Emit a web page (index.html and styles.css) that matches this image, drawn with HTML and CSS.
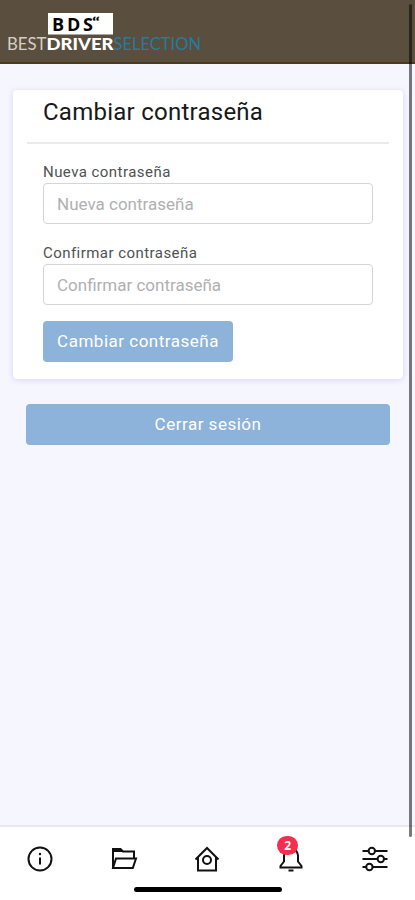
FILE: index.html
```html
<!DOCTYPE html>
<html lang="es">
<head>
<meta charset="utf-8">
<meta name="viewport" content="width=device-width, initial-scale=1">
<title>Cambiar contraseña</title>
<link rel="stylesheet" href="styles.css">
</head>
<body>
<header class="topbar">
  <svg class="logo" width="210" height="62" viewBox="0 0 210 62" role="img" aria-label="BDS Best Driver Selection">
    <rect class="logo-box" x="48" y="13" width="65" height="21.5"/>
    <text class="logo-bds" x="52" y="30.5" textLength="41">BDS</text>
    <text class="logo-mark" x="92" y="26.500" textLength="8" lengthAdjust="spacingAndGlyphs">“</text>
    <text class="logo-best" x="7" y="49.5" textLength="39.500" lengthAdjust="spacingAndGlyphs">BEST</text>
    <text class="logo-driver" x="46.500" y="49.5" textLength="67" lengthAdjust="spacingAndGlyphs">DRIVER</text>
    <text class="logo-selection" x="113.500" y="49.5" textLength="87.500" lengthAdjust="spacingAndGlyphs">SELECTION</text>
  </svg>
</header>
<main class="content">
  <section class="card">
    <h1 class="card-title">Cambiar contraseña</h1>
    <form class="form">
      <label class="label label-new" for="new">Nueva contraseña</label>
      <input class="input" id="new" type="password" placeholder="Nueva contraseña">
      <label class="label label-confirm" for="confirm">Confirmar contraseña</label>
      <input class="input" id="confirm" type="password" placeholder="Confirmar contraseña">
      <button class="button" type="button">Cambiar contraseña</button>
    </form>
  </section>
  <button class="button button-logout" type="button">Cerrar sesión</button>
</main>
<nav class="tabs">
  <a class="tab"><svg class="icon" viewBox="0 0 26 26"><circle cx="13" cy="13" r="11.5"/><path d="M13 11.5V18.5"/><circle class="solid" cx="13" cy="8" r="1.2"/></svg></a>
  <a class="tab"><svg class="icon" viewBox="0 0 26 26"><path d="M2 22V3H9.500L12 5.500H23V12.500M2 22L5 12.500H25L21.800 22Z"/><path class="solid" d="M2 3H9.500L12 6H2Z"/></svg></a>
  <a class="tab"><svg class="icon" viewBox="0 0 26 26"><path d="M1.500 13.500L13 2L24.500 13.500M4 11.500V24.500H22V11.500"/><circle cx="13" cy="14" r="4"/></svg></a>
  <a class="tab"><svg class="icon" viewBox="0 0 26 26"><path d="M6 9.500C6.500 5 9 3 13 3S19.500 5 20 9.500V15.500L23.500 20V21.500H2.500V20L6 15.500Z"/><path d="M10.500 24.500H15.500"/></svg><span class="badge">2</span></a>
  <a class="tab"><svg class="icon" viewBox="0 0 26 26"><path d="M.500 5H6.500M13 5H25.500M.500 13H15.500M22 13H25.500M.500 21H4M11 21H25.500"/><circle cx="9.800" cy="5" r="3.200"/><circle cx="18.800" cy="13" r="3.200"/><circle cx="7.400" cy="21" r="3.200"/></svg></a>
</nav>
<div class="scrollbar"></div>
<div class="home-indicator"></div>
</body>
</html>
```
FILE: styles.css
```css
* { box-sizing: border-box; }
body {
  margin: 0;
  height: 900px;
  display: flex;
  flex-direction: column;
  position: relative;
  overflow: hidden;
  background: #f6f6ff;
  color: #17181a;
  font-family: Roboto, "Liberation Sans", sans-serif;
}
.topbar { height: 64px; flex: none; background: #5a4e3e; border-bottom: 2px solid #4c3a18; }
.logo { display: block; font-family: Lato, sans-serif; font-size: 16.5px; }
.logo-box { fill: #fff; }
.logo-bds { font-family: "Open Sans", sans-serif; font-size: 18px; font-weight: 700; fill: #050505; }
.logo-mark { font-size: 14px; font-weight: 700; fill: #050505; }
.logo-best { fill: #d6cfc6; }
.logo-driver { font-weight: 900; fill: #fff; }
.logo-selection { fill: #287a9f; }
.content { flex: 1; padding: 26px 12px 0 13px; }
.card {
  height: 289px;
  border-radius: 4px;
  background: #fff;
  box-shadow: 0 1px 5px 1px #dfdcfb;
}
.card-title {
  margin: 0 14px;
  height: 54px;
  padding: 0 16px;
  border-bottom: 2px solid #ebebed;
  font-size: 24px;
  font-weight: 400;
  line-height: 44px;
  letter-spacing: .25px;
}
.form { display: flex; flex-direction: column; align-items: flex-start; padding: 18px 30px 0; }
.label { height: 21px; font-size: 15px; line-height: 21px; letter-spacing: .45px; color: #505153; }
.label-confirm { margin-top: 19px; }
.input {
  width: 100%;
  height: 41px;
  padding: 0 13px;
  border: 1px solid #d3d6d7;
  border-radius: 4px;
  background: #fff;
  font: 17px Roboto, sans-serif;
  letter-spacing: 0;
}
.input::placeholder { color: #b0b0b2; opacity: 1; }
.button {
  height: 41px;
  width: 190px;
  margin-top: 16px;
  padding: 0 0 2px;
  border: 0;
  border-radius: 4px;
  background: #8db3da;
  color: #fff;
  font: 17px Roboto, sans-serif;
  letter-spacing: .5px;
}
.button-logout { display: block; width: 364px; margin: 25px 0 0 13px; }
.tabs {
  flex: none;
  height: 75px;
  padding-top: 19px;
  display: grid;
  grid-template-columns: repeat(5, 83.7px);
  margin-left: -2px;
  border-top: 2px solid #e9e9ed;
  background: #fff;
}
.tab { position: relative; display: flex; justify-content: center; align-items: flex-start; }
.icon { width: 26px; height: 26px; overflow: visible; fill: none; stroke: #111; stroke-width: 2; }
.icon .solid { fill: #111; stroke: none; }
.badge {
  position: absolute;
  left: 28px;
  top: -10px;
  width: 21px;
  height: 19px;
  border-radius: 10px;
  background: #f52d4e;
  color: #fff;
  font: 700 12px/19px "Open Sans", sans-serif;
  text-align: center;
}
.scrollbar { position: absolute; left: 409px; top: 4px; width: 3px; height: 833px; border-radius: 2px; background: rgba(0, 0, 0, .52); }
.home-indicator { position: absolute; left: 134px; top: 887px; width: 148px; height: 5px; border-radius: 3px; background: #000; }
```
